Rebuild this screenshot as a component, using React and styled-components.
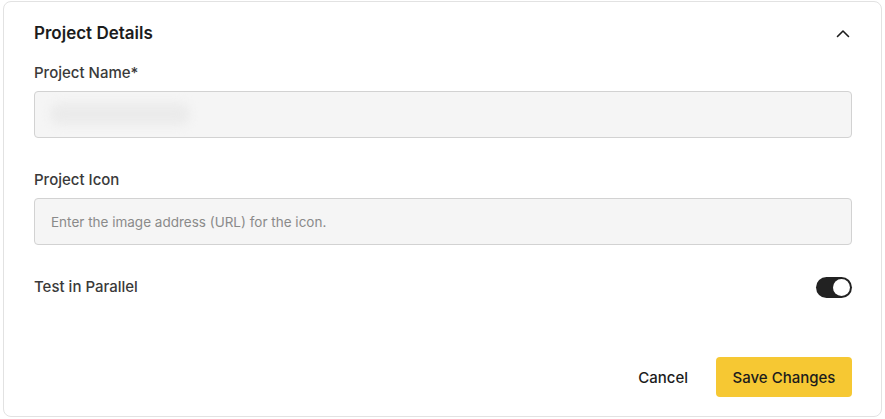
import React, { useState } from 'react';
import styled, { createGlobalStyle } from 'styled-components';

const GlobalStyle = createGlobalStyle`
  html, body {
    margin: 0;
    padding: 0;
    background: #ffffff;
    font-family: Inter, "Noto Sans", sans-serif;
  }
`;

const Card = styled.section`
  box-sizing: border-box;
  margin: 1px 0 0 3px;
  width: 879px;
  height: 416px;
  padding: 19px 29px 19px 30px;
  border: 1px solid #e2e2e2;
  border-radius: 8px;
  background: #fff;
  display: flex;
  flex-direction: column;
`;

const Header = styled.div`
  display: flex;
  justify-content: space-between;
  align-items: center;
  height: 24px;
`;

const Title = styled.h2`
  margin: 0;
  font-size: 17px;
  font-weight: 600;
  color: #1c1c1c;
  line-height: 24px;
`;

const Collapse = styled.button`
  border: 0;
  background: none;
  padding: 0;
  width: 18px;
  height: 18px;
  display: flex;
  align-items: center;
  justify-content: center;
  cursor: pointer;
  margin-right: 0;
`;

const Field = styled.div`
  display: flex;
  flex-direction: column;
  gap: 7px;
  margin-top: ${p => p.$top}px;
`;

const Label = styled.label`
  font-size: 15px;
  font-weight: 500;
  color: #3a3a3a;
  line-height: 22px;
`;

const Input = styled.input`
  box-sizing: border-box;
  width: 100%;
  height: 47px;
  border: 1px solid #d2d2d2;
  border-radius: 4px;
  background: #f5f5f5;
  padding: 0 16px;
  font-family: inherit;
  font-size: 13.5px;
  color: #333;
  outline: none;

  &::placeholder {
    color: #8a8a8a;
  }
`;

const InputWrap = styled.div`
  position: relative;
`;

const BlurredValue = styled.span`
  position: absolute;
  left: 16px;
  top: 12px;
  width: 140px;
  height: 22px;
  border-radius: 11px;
  background: #ebebeb;
  filter: blur(5px);
  pointer-events: none;
`;

const ToggleRow = styled.div`
  display: flex;
  justify-content: space-between;
  align-items: center;
  margin-top: 31px;
  height: 22px;
`;

const Track = styled.button`
  box-sizing: border-box;
  width: 36px;
  height: 21px;
  border: 0;
  border-radius: 11px;
  background: ${p => (p.$on ? '#222222' : '#cfcfcf')};
  padding: 2px;
  display: flex;
  justify-content: ${p => (p.$on ? 'flex-end' : 'flex-start')};
  cursor: pointer;
`;

const Knob = styled.span`
  width: 17px;
  height: 17px;
  border-radius: 50%;
  background: #fff;
`;

const Footer = styled.div`
  margin-top: auto;
  display: flex;
  justify-content: flex-end;
  align-items: center;
  gap: 28px;
`;

const TextButton = styled.button`
  border: 0;
  background: none;
  padding: 0;
  font-family: inherit;
  font-size: 15px;
  font-weight: 500;
  color: #1c1c1c;
  cursor: pointer;
`;

const PrimaryButton = styled.button`
  height: 40px;
  width: 136px;
  border: 0;
  border-radius: 4px;
  background: #f6c833;
  font-family: inherit;
  font-size: 15px;
  font-weight: 500;
  color: #1c1c1c;
  cursor: pointer;
`;

const ChevronUp = () => (
  <svg width="14" height="9" viewBox="0 0 14 9" fill="none">
    <path d="M1.5 7.5L7 2l5.5 5.5" stroke="#1c1c1c" strokeWidth="1.6" strokeLinecap="round" strokeLinejoin="round" />
  </svg>
);

const App = () => {
  const [parallel, setParallel] = useState(true);

  return (
    <>
      <GlobalStyle />
      <Card>
        <Header>
          <Title>Project Details</Title>
          <Collapse aria-label="Collapse">
            <ChevronUp />
          </Collapse>
        </Header>

        <Field $top={17}>
          <Label>Project Name*</Label>
          <InputWrap>
            <Input defaultValue="" />
            <BlurredValue />
          </InputWrap>
        </Field>

        <Field $top={31}>
          <Label>Project Icon</Label>
          <Input placeholder="Enter the image address (URL) for the icon." />
        </Field>

        <ToggleRow>
          <Label>Test in Parallel</Label>
          <Track $on={parallel} onClick={() => setParallel(!parallel)}>
            <Knob />
          </Track>
        </ToggleRow>

        <Footer>
          <TextButton>Cancel</TextButton>
          <PrimaryButton>Save Changes</PrimaryButton>
        </Footer>
      </Card>
    </>
  );
};

export default App;
